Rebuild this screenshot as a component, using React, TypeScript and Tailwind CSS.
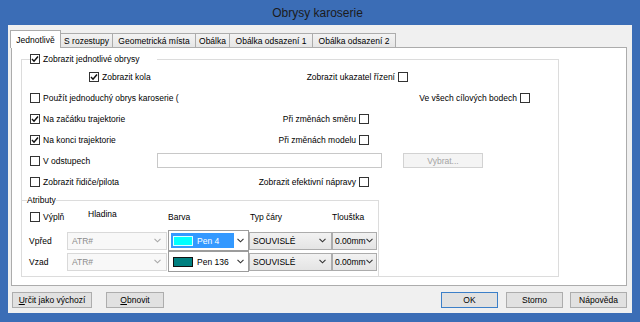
import React from 'react';

const Check = ({ on }: { on?: boolean }) => (
  <span className="w-[10px] h-[10px] shrink-0 border border-[#333] bg-white flex items-center justify-center">
    {on && (
      <svg width="8" height="8" viewBox="0 0 8 8">
        <path d="M1 4.1 L3 6.2 L7 1.4" fill="none" stroke="#111" strokeWidth="1.5" />
      </svg>
    )}
  </span>
);

const Chevron = ({ c = '#333' }: { c?: string }) => (
  <svg width="7" height="5" viewBox="0 0 7 5" className="shrink-0">
    <path d="M0.5 0.8 L3.5 3.8 L6.5 0.8" fill="none" stroke={c} strokeWidth="1.1" />
  </svg>
);

const Left = ({ label, on, w, pl = '' }: { label: string; on?: boolean; w: string; pl?: string }) => (
  <div className={`flex items-center gap-[3px] ${w} ${pl}`}>
    <Check on={on} />
    <span className="whitespace-nowrap">{label}</span>
  </div>
);

const Right = ({ label, w }: { label: string; w: string }) => (
  <div className={`flex items-center justify-end gap-[3px] ${w}`}>
    <span className="whitespace-nowrap">{label}</span>
    <Check />
  </div>
);

const tabs = [
  { t: 'S rozestupy', w: 'w-[52px]' },
  { t: 'Geometrická místa', w: 'w-[83px]' },
  { t: 'Obálka', w: 'w-[34px]' },
  { t: 'Obálka odsazení 1', w: 'w-[83px]' },
  { t: 'Obálka odsazení 2', w: 'w-[83px]' },
];

const AtrCombo = () => (
  <div className="w-[100px] h-[18px] border border-[#d9d9d9] bg-[#f8f8f8] text-[#8c8c8c] flex items-center justify-between pl-[4px] pr-[5px]">
    <span>ATR#</span>
    <Chevron c="#a8a8a8" />
  </div>
);

const ListCombo = ({ children, w, px }: { children: React.ReactNode; w: string; px: string }) => (
  <div className={`${w} h-[18px] border border-[#acacac] bg-gradient-to-b from-[#f2f2f2] to-[#e4e4e4] flex items-center justify-between ${px}`}>
    {children}
    <Chevron />
  </div>
);

const PenCombo = ({ pen, sel }: { pen: string; sel?: boolean }) => (
  <div className="w-[81px] h-[21px] border border-[#9c9c9c] bg-white flex items-center pl-[2px] pr-[4px]">
    <div className={`w-[63px] h-[15px] flex items-center gap-[4px] pl-[2px] ${sel ? 'bg-[#3399ff] text-white' : 'text-black'}`}>
      <span className={`w-[20px] h-[10px] border ${sel ? 'bg-[#00ffff] border-[#dff]' : 'bg-[#008080] border-[#111]'}`} />
      <span className="whitespace-nowrap">{pen}</span>
    </div>
    <span className="ml-auto"><Chevron /></span>
  </div>
);

const Btn = ({ children, w, ok }: { children: React.ReactNode; w: string; ok?: boolean }) => (
  <div className={`${w} h-[16px] border ${ok ? 'border-[#3c7fc8]' : 'border-[#adadad]'} bg-[#e1e1e1] flex items-center justify-center whitespace-nowrap`}>
    {children}
  </div>
);

export default function App() {
  return (
    <div className="w-[640px] h-[322px] bg-[#3b6db6] flex flex-col font-['Liberation_Sans',Arial,sans-serif] text-[8.5px] leading-[12px] text-black overflow-hidden">
      <div className="h-[25px] shrink-0 flex items-center justify-center text-[12px] text-[#1b1b1b] pr-[5px]">
        Obrysy karoserie
      </div>

      <div className="mx-[8px] h-[288px] bg-[#f0f0f0] flex flex-col pt-[5px]">
        {/* tabs */}
        <div className="flex items-end h-[18px] pl-[2px] -mb-[1px] relative z-10">
          <div className="h-[18px] w-[51px] bg-white border border-b-0 border-[#acacac] flex items-center justify-center">
            Jednotlivě
          </div>
          {tabs.map((t) => (
            <div
              key={t.t}
              className={`h-[15px] ${t.w} bg-gradient-to-b from-[#f3f3f3] to-[#e6e6e6] border-t border-r border-b border-[#acacac] flex items-center justify-center whitespace-nowrap`}
            >
              {t.t}
            </div>
          ))}
        </div>

        {/* panel */}
        <div className="ml-[3px] w-[616px] h-[239px] bg-white border border-[#acacac] pt-[5px] pl-[9px]">
          <fieldset className="w-[538px] border border-[#dcdcdc] pl-[8px]">
            <legend className="w-[127px]">
              <span className="flex items-center gap-[3px] h-[12px]">
                <Check on />
                <span className="whitespace-nowrap">Zobrazit jednotlivé obrysy</span>
              </span>
            </legend>

            <div className="mt-[1px] flex flex-col">
              <div className="h-[21px] flex items-center">
                <Left label="Zobrazit kola" on w="w-[150px]" pl="pl-[59px]" />
                <Right label="Zobrazit ukazatel řízení" w="w-[228px]" />
              </div>
              <div className="h-[21px] flex items-center">
                <Left label="Použít jednoduchý obrys karoserie (" w="w-[250px]" />
                <Right label="Ve všech cílových bodech" w="w-[250px]" />
              </div>
              <div className="h-[21px] flex items-center">
                <Left label="Na začátku trajektorie" on w="w-[200px]" />
                <Right label="Při změnách směru" w="w-[139px]" />
              </div>
              <div className="h-[21px] flex items-center">
                <Left label="Na konci trajektorie" on w="w-[200px]" />
                <Right label="Při změnách modelu" w="w-[139px]" />
              </div>
              <div className="h-[21px] flex items-center">
                <Left label="V odstupech" w="w-[127px]" />
                <div className="w-[225px] h-[15px] border border-[#c8c8c8] bg-white" />
                <div className="ml-[21px] w-[80px] h-[15px] border border-[#d2d2d2] bg-[#f4f4f4] text-[#a3a3a3] flex items-center justify-center">
                  Vybrat...
                </div>
              </div>
              <div className="h-[21px] flex items-center">
                <Left label="Zobrazit řidiče/pilota" w="w-[200px]" />
                <Right label="Zobrazit efektivní nápravy" w="w-[139px]" />
              </div>
            </div>

            <fieldset className="-ml-[9px] mt-[2px] -mb-[1px] w-[358px] border border-[#dcdcdc] pl-[5px] pb-[4px]">
              <legend className="leading-[12px] h-[12px]">Atributy</legend>

              <div className="mt-[1px] h-[20px] grid grid-cols-[40px_101px_81px_83px_45px] items-center">
                <div className="pl-[3px] flex items-center gap-[3px]">
                  <Check />
                  <span>Výplň</span>
                </div>
                <div className="pl-[21px] mb-[6px]">Hladina</div>
                <div>Barva</div>
                <div className="pl-[1px]">Typ čáry</div>
                <div>Tlouštka</div>
              </div>

              <div className="mt-[3px] h-[21px] grid grid-cols-[40px_101px_81px_83px_45px] items-center">
                <div className="pl-[2px]">Vpřed</div>
                <AtrCombo />
                <PenCombo pen="Pen 4" sel />
                <ListCombo w="w-[83px]" px="pl-[3px] pr-[5px]"><span>SOUVISLÉ</span></ListCombo>
                <ListCombo w="w-[45px]" px="pl-[2px] pr-[3px]"><span className="whitespace-nowrap">0.00mm</span></ListCombo>
              </div>
              <div className="h-[21px] grid grid-cols-[40px_101px_81px_83px_45px] items-center">
                <div className="pl-[2px]">Vzad</div>
                <AtrCombo />
                <PenCombo pen="Pen 136" />
                <ListCombo w="w-[83px]" px="pl-[3px] pr-[5px]"><span>SOUVISLÉ</span></ListCombo>
                <ListCombo w="w-[45px]" px="pl-[2px] pr-[3px]"><span className="whitespace-nowrap">0.00mm</span></ListCombo>
              </div>
            </fieldset>
          </fieldset>
        </div>

        {/* buttons */}
        <div className="mt-[6px] h-[16px] flex items-center pl-[4px] pr-[5px]">
          <Btn w="w-[80px]"><span><span className="underline">U</span>rčit jako výchozí</span></Btn>
          <span className="ml-[14px]" />
          <Btn w="w-[58px]"><span><span className="underline">O</span>bnovit</span></Btn>
          <span className="flex-1" />
          <Btn w="w-[57px]" ok>OK</Btn>
          <span className="ml-[8px]" />
          <Btn w="w-[57px]">Storno</Btn>
          <span className="ml-[7px]" />
          <Btn w="w-[57px]">Nápověda</Btn>
        </div>
      </div>
    </div>
  );
}
